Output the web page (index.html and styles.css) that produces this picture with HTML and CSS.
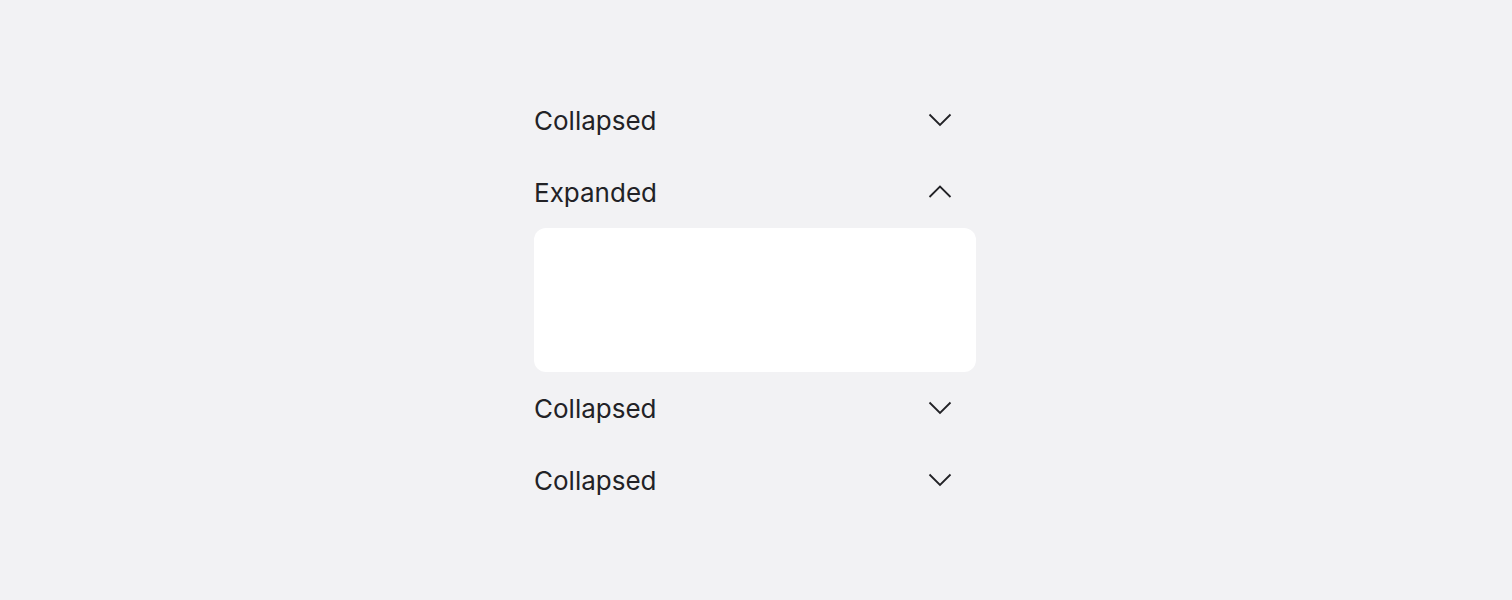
FILE: index.html
```html
<!DOCTYPE html>
<html lang="en">
    <head>
        <meta name="viewport" content="width=device-width, initial-scale=1" />
        <title>Accordion</title>
        <link rel="stylesheet" href="styles.css">
    </head>
    <body>
        <div class="accordion">
            <div class="item">
                <div class="header">
                    <span class="title">Collapsed</span>
                    <svg class="chevron" width="24" height="24" viewBox="0 0 24 24"><path d="M1.5 6.5 L12 17 L22.5 6.5" /></svg>
                </div>
            </div>
            <div class="item open">
                <div class="header">
                    <span class="title">Expanded</span>
                    <svg class="chevron" width="24" height="24" viewBox="0 0 24 24"><path d="M1.5 17 L12 6.5 L22.5 17" /></svg>
                </div>
                <div class="panel"></div>
            </div>
            <div class="item">
                <div class="header">
                    <span class="title">Collapsed</span>
                    <svg class="chevron" width="24" height="24" viewBox="0 0 24 24"><path d="M1.5 6.5 L12 17 L22.5 6.5" /></svg>
                </div>
            </div>
            <div class="item">
                <div class="header">
                    <span class="title">Collapsed</span>
                    <svg class="chevron" width="24" height="24" viewBox="0 0 24 24"><path d="M1.5 6.5 L12 17 L22.5 6.5" /></svg>
                </div>
            </div>
        </div>
    </body>
</html>
```

FILE: styles.css
```css
body {
    background-color: #f2f2f4;
    color: #222226;
    font: normal 26px Inter, "Noto Sans", sans-serif;
    margin: 0;
    padding-right: 2px;
    height: 600px;
    display: flex;
    align-items: center;
    justify-content: center;
}
.accordion {
    width: 442px;
    display: flex;
    flex-direction: column;
}
.header {
    height: 72px;
    display: flex;
    align-items: center;
    justify-content: space-between;
    padding-right: 24px;
}
.title {
    line-height: 1;
    padding-top: 2px;
}
.chevron {
    fill: none;
    stroke: #222226;
    stroke-width: 1.8;
}
.panel {
    height: 144px;
    background-color: #fff;
    border-radius: 12px;
}
```
